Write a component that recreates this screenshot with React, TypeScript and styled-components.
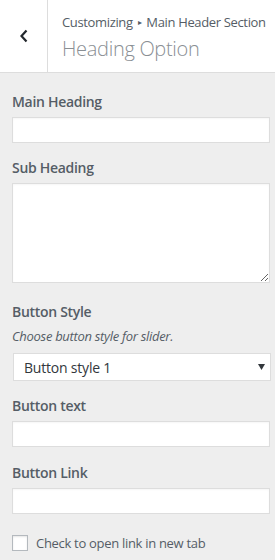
import React, { useState } from 'react';
import styled, { createGlobalStyle } from 'styled-components';

const GlobalStyle = createGlobalStyle`
  html, body {
    margin: 0;
    padding: 0;
    background: #eeeeee;
  }
  body {
    font-family: "Open Sans", "Noto Sans", sans-serif;
    color: #555d66;
  }
  * {
    box-sizing: border-box;
  }
`;

const Panel = styled.div`
  width: 275px;
  min-height: 560px;
  background: #eeeeee;
`;

const Header = styled.div`
  display: flex;
  height: 73px;
  background: #ffffff;
  border-bottom: 1px solid #dddddd;
`;

const BackButton = styled.button`
  width: 48px;
  flex: 0 0 48px;
  border: none;
  border-right: 1px solid #dddddd;
  background: #ffffff;
  padding: 0;
  display: flex;
  align-items: center;
  justify-content: center;
  cursor: pointer;
`;

const TitleBlock = styled.div`
  padding: 13px 0 0 14px;
  display: flex;
  flex-direction: column;
  overflow: hidden;
`;

const Breadcrumb = styled.span`
  font-size: 13px;
  line-height: 18px;
  color: #555d66;
  white-space: nowrap;
  letter-spacing: -0.35px;
`;

const Crumb = styled.span`
  font-size: 8px;
  margin: 0 5px;
  position: relative;
  top: -2px;
`;

const Title = styled.h3`
  margin: 3px 0 0;
  font-size: 20px;
  line-height: 26px;
  font-weight: 300;
  color: #8a8f94;
  letter-spacing: -0.3px;
`;

const Content = styled.div`
  padding: 18px 5px 12px 12px;
`;

const Control = styled.div<{ $gap?: number }>`
  margin-bottom: ${({ $gap }) => $gap ?? 14}px;
`;

const Label = styled.label`
  display: block;
  font-size: 14px;
  line-height: 21px;
  font-weight: 600;
  color: #555d66;
  margin-bottom: 5px;
  letter-spacing: -0.3px;
`;

const Description = styled.span`
  display: block;
  font-size: 13px;
  line-height: 18px;
  font-style: italic;
  color: #555d66;
  margin: 0 0 8px;
  letter-spacing: -0.3px;
`;

const TextInput = styled.input`
  display: block;
  width: 258px;
  height: 26px;
  margin: 0;
  padding: 2px 8px;
  border: 1px solid #dddddd;
  background: #ffffff;
  box-shadow: inset 0 1px 2px rgba(0, 0, 0, 0.04);
  font-family: inherit;
  font-size: 14px;
  outline: none;
`;

const TextArea = styled.textarea`
  display: block;
  width: 258px;
  height: 100px;
  margin: 0;
  padding: 2px 6px;
  border: 1px solid #dddddd;
  background: #ffffff;
  box-shadow: inset 0 1px 2px rgba(0, 0, 0, 0.04);
  font-family: inherit;
  font-size: 14px;
  resize: both;
  outline: none;
`;

const SelectWrap = styled.div`
  position: relative;
  width: 258px;
  margin-left: 1px;
`;

const Select = styled.select`
  display: block;
  width: 100%;
  height: 28px;
  margin: 0;
  padding: 0 24px 0 10px;
  border: 1px solid #dddddd;
  border-radius: 0;
  background: #ffffff;
  appearance: none;
  -webkit-appearance: none;
  font-family: inherit;
  font-size: 14px;
  color: #32373c;
  letter-spacing: -0.2px;
  outline: none;
`;

const Caret = styled.svg`
  position: absolute;
  right: 6px;
  top: 11px;
  pointer-events: none;
`;

const CheckRow = styled.label`
  display: flex;
  align-items: center;
  gap: 8px;
  font-size: 13px;
  color: #555d66;
  letter-spacing: -0.3px;
  cursor: pointer;
`;

const Checkbox = styled.input`
  appearance: none;
  -webkit-appearance: none;
  width: 16px;
  height: 16px;
  margin: 0;
  border: 1px solid #b4b9be;
  background: #ffffff;
  box-shadow: inset 0 1px 2px rgba(0, 0, 0, 0.1);
  flex: 0 0 16px;
`;

const App: React.FC = () => {
  const [style, setStyle] = useState('1');

  return (
    <Panel>
      <GlobalStyle />
      <Header>
        <BackButton aria-label="Back">
          <svg width="10" height="14" viewBox="0 0 10 14">
            <path d="M7.5 1.5 L2.5 7 L7.5 12.5" fill="none" stroke="#23282d" strokeWidth="2.2" />
          </svg>
        </BackButton>
        <TitleBlock>
          <Breadcrumb>
            Customizing<Crumb>▸</Crumb>Main Header Section
          </Breadcrumb>
          <Title>Heading Option</Title>
        </TitleBlock>
      </Header>
      <Content>
        <Control>
          <Label>Main Heading</Label>
          <TextInput type="text" />
        </Control>
        <Control $gap={18}>
          <Label>Sub Heading</Label>
          <TextArea />
        </Control>
        <Control>
          <Label>Button Style</Label>
          <Description>Choose button style for slider.</Description>
          <SelectWrap>
            <Select value={style} onChange={(e) => setStyle(e.target.value)}>
              <option value="1">Button style 1</option>
              <option value="2">Button style 2</option>
            </Select>
            <Caret width="7" height="6" viewBox="0 0 7 6">
              <path d="M0 0 H7 L3.5 6 Z" fill="#32373c" />
            </Caret>
          </SelectWrap>
        </Control>
        <Control $gap={15}>
          <Label>Button text</Label>
          <TextInput type="text" />
        </Control>
        <Control $gap={20}>
          <Label>Button Link</Label>
          <TextInput type="text" />
        </Control>
        <CheckRow>
          <Checkbox type="checkbox" />
          Check to open link in new tab
        </CheckRow>
      </Content>
    </Panel>
  );
};

export default App;
